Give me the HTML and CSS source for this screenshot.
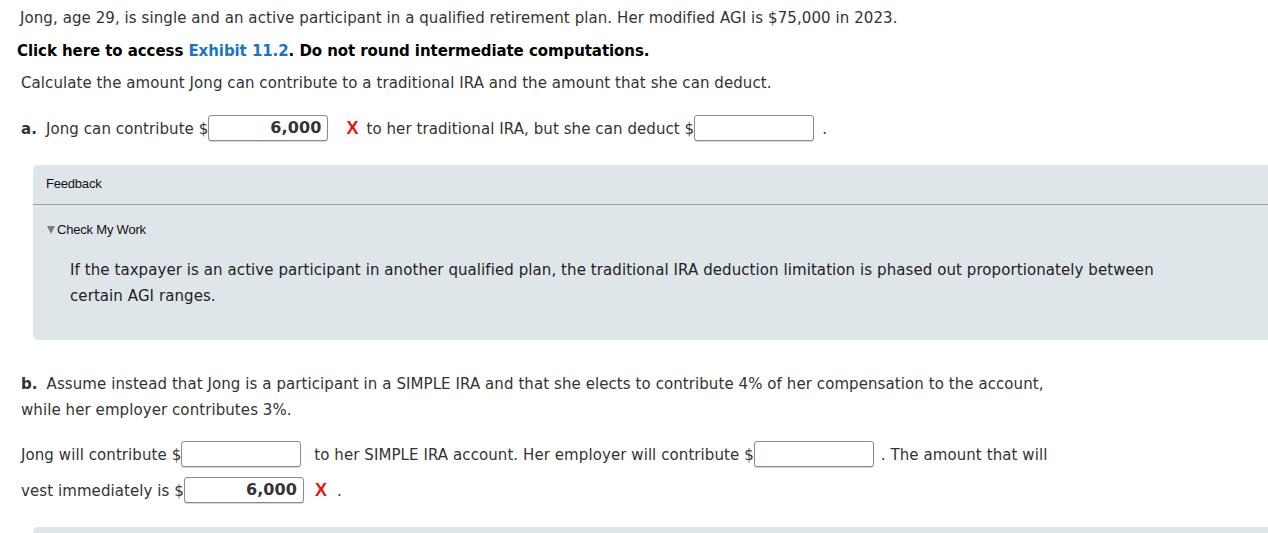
FILE: index.html
```html
<!DOCTYPE html>
<html lang="en">
<head>
<meta charset="utf-8">
<title>Jong IRA</title>
<link rel="stylesheet" href="styles.css">
</head>
<body>
<div class="page">
  <p class="intro">Jong, age 29, is single and an active participant in a qualified retirement plan. Her modified AGI is $75,000 in 2023.</p>
  <p class="directions">Click here to access <a class="link" href="#">Exhibit 11.2</a>. Do not round intermediate computations.</p>
  <p class="calc">Calculate the amount Jong can contribute to a traditional IRA and the amount that she can deduct.</p>

  <div class="part part-a">
    <span class="label">a.</span>Jong can contribute $<span class="inp filled">6,000</span><span class="wrong wrong-a">X</span>to her traditional IRA, but she can deduct $<span class="inp"></span><span class="dot-a">.</span>
  </div>

  <section class="feedback feedback-main">
    <div class="fb-head">Feedback</div>
    <div class="fb-body">
      <div class="cmw"><span class="tri"></span>Check My Work</div>
      <p class="fb-text">If the taxpayer is an active participant in another qualified plan, the traditional IRA deduction limitation is phased out proportionately between certain AGI ranges.</p>
    </div>
  </section>

  <p class="part-b-q"><span class="label">b.</span><span class="nw">Assume instead that Jong is a participant in a SIMPLE IRA and that she elects to contribute 4% of her compensation to the account,</span> <span class="nw">while her employer contributes 3%.</span></p>

  <div class="part-b-ans">Jong will contribute $<span class="inp"></span><span class="sp-b">to her SIMPLE IRA account. Her employer will contribute $</span><span class="inp"></span><span class="sp-c">. The amount that will</span> <span class="nw">vest immediately is $</span><span class="inp filled">6,000</span><span class="wrong wrong-b">X</span>.</div>

  <section class="feedback feedback-next"></section>
</div>
</body>
</html>
```

FILE: styles.css
```css
html, body {
  margin: 0;
  padding: 0;
  overflow: hidden;
  background: #ffffff;
}

body {
  font-family: "DejaVu Sans", Verdana, sans-serif;
  font-size: 15px;
  letter-spacing: 0.08px;
  color: #333333;
}

.page {
  width: 1268px;
  height: 533px;
  overflow: hidden;
}

p {
  margin: 0;
}

.nw {
  white-space: nowrap;
}

.intro {
  padding: 8px 0 0 20px;
  line-height: 20px;
}

.directions {
  margin-top: 13px;
  padding-left: 17px;
  line-height: 20px;
  font-weight: bold;
  letter-spacing: -0.07px;
  color: #000000;
}

.link {
  color: #1a73c4;
  text-decoration: none;
}

.calc {
  margin-top: 12px;
  padding-left: 21px;
  line-height: 20px;
}

.part {
  padding-left: 21px;
}

.part-a {
  margin-top: 22px;
  line-height: 26px;
  height: 26px;
  white-space: nowrap;
}

.label {
  font-weight: bold;
  color: #333333;
  margin-right: 9px;
}

.inp {
  display: inline-block;
  box-sizing: border-box;
  width: 120px;
  height: 26px;
  vertical-align: top;
  border: 1px solid #8c8c8c;
  border-radius: 3px;
  box-shadow: 0 1px 1px rgba(0, 0, 0, 0.18);
  background: #ffffff;
  text-align: right;
  padding-right: 6px;
  line-height: 24px;
  font-weight: bold;
  font-size: 16px;
  color: #333333;
}

.wrong {
  font-family: "Liberation Sans", Arial, sans-serif;
  font-weight: bold;
  font-size: 18px;
  color: #ee1111;
}

.wrong-a {
  margin: 0 8px 0 18px;
}

.dot-a {
  margin-left: 8px;
}

.feedback {
  margin: 0 -20px 0 33px;
  background: #dfe6ea;
  border-radius: 5px 0 0 5px;
}

.feedback-main {
  margin-top: 24px;
  height: 175px;
  box-sizing: border-box;
}

.fb-head {
  height: 40px;
  box-sizing: border-box;
  padding: 11px 0 0 13px;
  font-family: "Liberation Sans", Arial, sans-serif;
  font-size: 13px;
  line-height: 16px;
  letter-spacing: -0.2px;
  color: #111111;
  border-bottom: 1px solid #9aa0a3;
}

.fb-body {
  padding: 17px 0 20px 0;
}

.cmw {
  padding-left: 14px;
  font-family: "Liberation Sans", Arial, sans-serif;
  font-size: 13px;
  letter-spacing: -0.2px;
  line-height: 16px;
  color: #111111;
  display: flex;
  align-items: center;
}

.tri {
  width: 0;
  height: 0;
  border-left: 4.5px solid transparent;
  border-right: 4.5px solid transparent;
  border-top: 8px solid #7d7d7d;
  margin-right: 2px;
}

.fb-text {
  margin: 19px 110px 0 37px;
  line-height: 26px;
  color: #222222;
}

.part-b-q {
  margin-top: 31px;
  padding-left: 21px;
  width: 1045px;
  line-height: 26px;
}

.part-b-ans {
  margin-top: 15px;
  padding-left: 21px;
  width: 1050px;
  line-height: 35px;
}

.part-b-ans .inp {
  vertical-align: middle;
  margin-top: -4px;
}

.sp-b {
  margin-left: 13px;
}

.sp-c {
  margin-left: 7px;
}

.wrong-b {
  margin: 0 10px 0 11px;
}

.feedback-next {
  margin-top: 18px;
  height: 40px;
}
```
